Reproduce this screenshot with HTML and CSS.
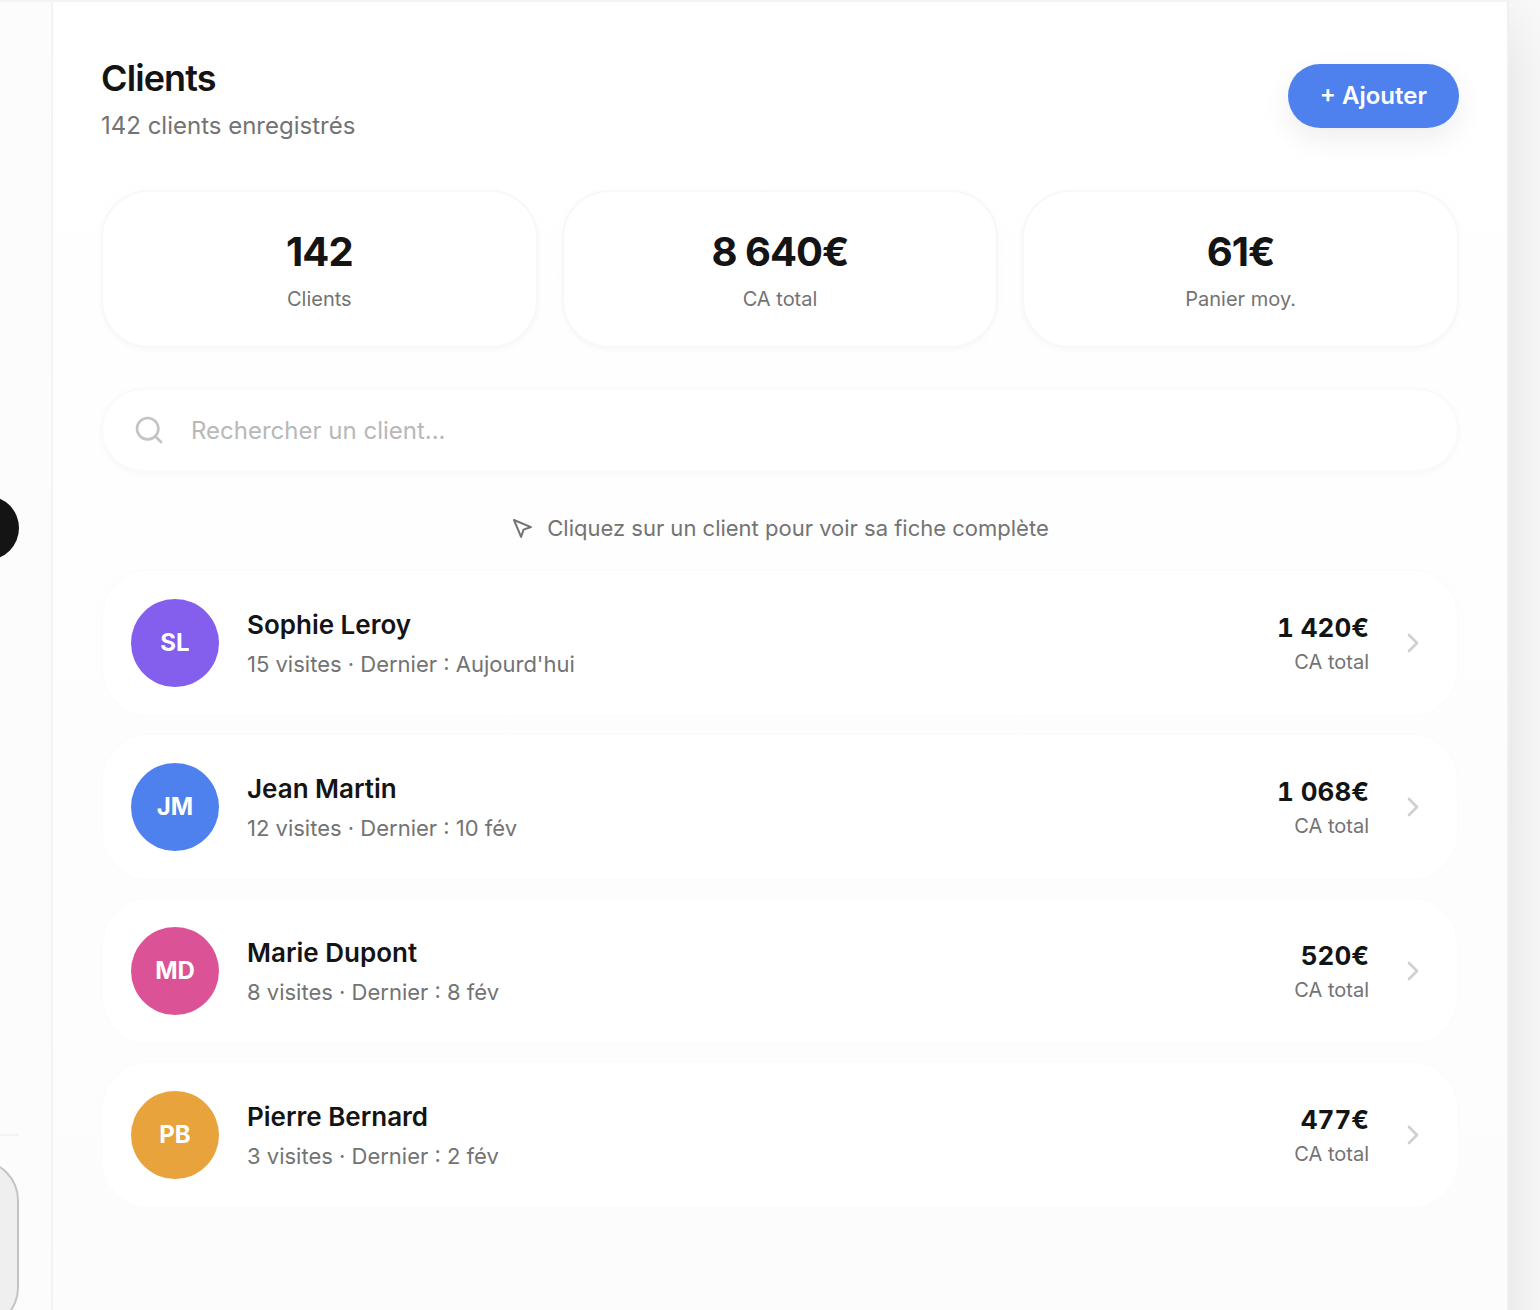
FILE: index.html
```html
<!doctype html>
<html lang="fr">
<head>
<meta charset="utf-8">
<title>Clients</title>
<meta name="viewport" content="width=device-width,initial-scale=1.0">
<link rel="stylesheet" href="styles.css">
</head>
<body>
<div class="window">
	<aside class="sidebar">
		<a href="#" class="nav_active" aria-label="Clients"></a>
		<div class="side_foot">
			<button type="button" class="side_card" aria-label="Compte"></button>
		</div>
	</aside>
	<main class="main">
		<header class="head">
			<div>
				<h1>Clients</h1>
				<p class="sub">142 clients enregistrés</p>
			</div>
			<button type="button" class="add">+ Ajouter</button>
		</header>

		<section class="stats">
			<div class="stat">
				<strong>142</strong>
				<span>Clients</span>
			</div>
			<div class="stat">
				<strong>8 640€</strong>
				<span>CA total</span>
			</div>
			<div class="stat">
				<strong>61€</strong>
				<span>Panier moy.</span>
			</div>
		</section>

		<label class="search">
			<svg viewBox="0 0 24 24"><circle cx="11" cy="11" r="8"/><path d="m21 21-4.35-4.35"/></svg>
			<input type="text" placeholder="Rechercher un client..." aria-label="Rechercher un client">
		</label>

		<p class="hint">
			<svg viewBox="0 0 24 24"><path d="m3 3 7.07 16.97 2.51-7.39 7.39-2.51L3 3z"/></svg>
			<span>Cliquez sur un client pour voir sa fiche complète</span>
		</p>

		<ul class="list">
			<li>
				<a href="#" class="row">
					<span class="avatar purple">SL</span>
					<span class="who"><b>Sophie Leroy</b><span>15 visites · Dernier : Aujourd'hui</span></span>
					<span class="amount"><b>1 420€</b><span>CA total</span></span>
					<svg viewBox="0 0 24 24"><path d="m9 18 6-6-6-6"/></svg>
				</a>
			</li>
			<li>
				<a href="#" class="row">
					<span class="avatar blue">JM</span>
					<span class="who"><b>Jean Martin</b><span>12 visites · Dernier : 10 fév</span></span>
					<span class="amount"><b>1 068€</b><span>CA total</span></span>
					<svg viewBox="0 0 24 24"><path d="m9 18 6-6-6-6"/></svg>
				</a>
			</li>
			<li>
				<a href="#" class="row">
					<span class="avatar pink">MD</span>
					<span class="who"><b>Marie Dupont</b><span>8 visites · Dernier : 8 fév</span></span>
					<span class="amount"><b>520€</b><span>CA total</span></span>
					<svg viewBox="0 0 24 24"><path d="m9 18 6-6-6-6"/></svg>
				</a>
			</li>
			<li>
				<a href="#" class="row">
					<span class="avatar orange">PB</span>
					<span class="who"><b>Pierre Bernard</b><span>3 visites · Dernier : 2 fév</span></span>
					<span class="amount"><b>477€</b><span>CA total</span></span>
					<svg viewBox="0 0 24 24"><path d="m9 18 6-6-6-6"/></svg>
				</a>
			</li>
		</ul>
	</main>
</div>
</body>
</html>
```
FILE: styles.css
```css
*{box-sizing: border-box;}
body,h1,p,ul,li{margin: 0; padding: 0;}
ul{list-style: none;}
a{text-decoration: none; color: inherit;}
button,input{font: inherit; border: 0;}
svg{display: block; flex: none; fill: none; stroke: currentColor; stroke-width: 2; stroke-linecap: round; stroke-linejoin: round;}

body{
	font-family: Inter, "Liberation Sans", sans-serif;
	font-size: 24px;
	color: #141414;
	background: #f9f9f9;
	overflow: hidden;
}
.window{
	display: flex;
	min-height: calc(100vh + 42px);
	margin-right: 31px;
	border-top: 2px solid #f3f3f3;
	border-right: 2px solid #f0f0f0;
	box-shadow: 0 24px 60px rgba(0,0,0,0.11);
}

/* sidebar */
.sidebar{
	width: 53px;
	flex: none;
	display: flex;
	flex-direction: column;
	padding: 494px 32px 24px 0;
	background: #fcfcfc;
	border-right: 2px solid #f3f3f3;
}
.nav_active{
	height: 64px;
	margin-left: -48px;
	background: #141414;
	border-radius: 32px;
}
.side_foot{
	margin: auto 0 0 -48px;
	padding-top: 24px;
	border-top: 2px solid #f3f3f3;
}
.side_card{
	display: block;
	width: 100%;
	height: 168px;
	background: #efefef;
	border: 2px solid #c4c4c4;
	border-left: 0;
	border-radius: 0 40px 40px 0;
}

/* main */
.main{
	flex: 1;
	min-width: 0;
	padding: 48px;
	background: linear-gradient(#fff, #fcfcfc);
}
.head{
	display: flex;
	justify-content: space-between;
	align-items: center;
	margin-bottom: 48px;
}
h1{
	margin-bottom: 4px;
	font-size: 36px;
	line-height: 56px;
	font-weight: 600;
	letter-spacing: -0.025em;
}
.sub{
	line-height: 32px;
	color: #737373;
}
.add{
	padding: 14px 32px;
	font-weight: 600;
	line-height: 36px;
	color: #fff;
	background: #4f81ee;
	border-radius: 32px;
	box-shadow: 0 10px 28px rgba(0,0,0,0.07);
}

.stats{
	display: grid;
	grid-template-columns: repeat(3, 1fr);
	gap: 24px;
	margin-bottom: 40px;
}
.stat{
	display: flex;
	flex-direction: column;
	align-items: center;
	gap: 4px;
	padding: 32px;
	background: #fff;
	border: 2px solid #f8f8f8;
	border-radius: 48px;
	box-shadow: 0 2px 6px rgba(0,0,0,0.03);
}
.stat strong{
	font-size: 40px;
	line-height: 56px;
	font-weight: 700;
	letter-spacing: -0.025em;
}
.stat span{
	font-size: 20px;
	line-height: 30px;
	color: #737373;
}

.search{
	display: flex;
	align-items: center;
	gap: 26px;
	height: 84px;
	padding: 0 30px;
	background: #fff;
	border: 2px solid #fafafa;
	border-radius: 42px;
	box-shadow: 0 2px 6px rgba(0,0,0,0.03);
}
.search svg{
	width: 32px;
	height: 32px;
	color: #c4c4c4;
}
.search input{
	flex: 1;
	min-width: 0;
	height: 32px;
	padding: 0;
	background: none;
	outline: 0;
}
.search input::placeholder{
	color: #b8b8b8;
}

.hint{
	display: flex;
	align-items: center;
	justify-content: center;
	gap: 12px;
	padding: 40px 0 24px;
	font-size: 22px;
	line-height: 33px;
	color: #737373;
}
.hint svg{
	width: 24px;
	height: 24px;
}

/* client list */
.list{
	display: flex;
	flex-direction: column;
	gap: 16px;
}
.row{
	display: flex;
	align-items: center;
	gap: 28px;
	padding: 28px;
	background: #fff;
	border: 2px solid #fcfcfc;
	border-radius: 48px;
}
.row svg{
	width: 32px;
	height: 32px;
	color: #d0d0d0;
}
.avatar{
	width: 88px;
	height: 88px;
	flex: none;
	border-radius: 50%;
	font-weight: 700;
	line-height: 88px;
	text-align: center;
	color: #fff;
}
.purple{background: #845eec;}
.blue{background: #4f81ee;}
.pink{background: #db5396;}
.orange{background: #e8a33c;}
.who{
	flex: 1;
	gap: 4px;
}
.who,.amount{
	display: flex;
	flex-direction: column;
}
.who b{
	font-size: 26px;
	line-height: 38px;
	font-weight: 600;
}
.who span{
	font-size: 22px;
	line-height: 32px;
	color: #737373;
}
.amount{
	text-align: right;
}
.amount b{
	font-size: 26px;
	line-height: 38px;
	font-weight: 700;
	font-variant-numeric: tabular-nums;
}
.amount span{
	font-size: 20px;
	line-height: 30px;
	color: #737373;
}
```
